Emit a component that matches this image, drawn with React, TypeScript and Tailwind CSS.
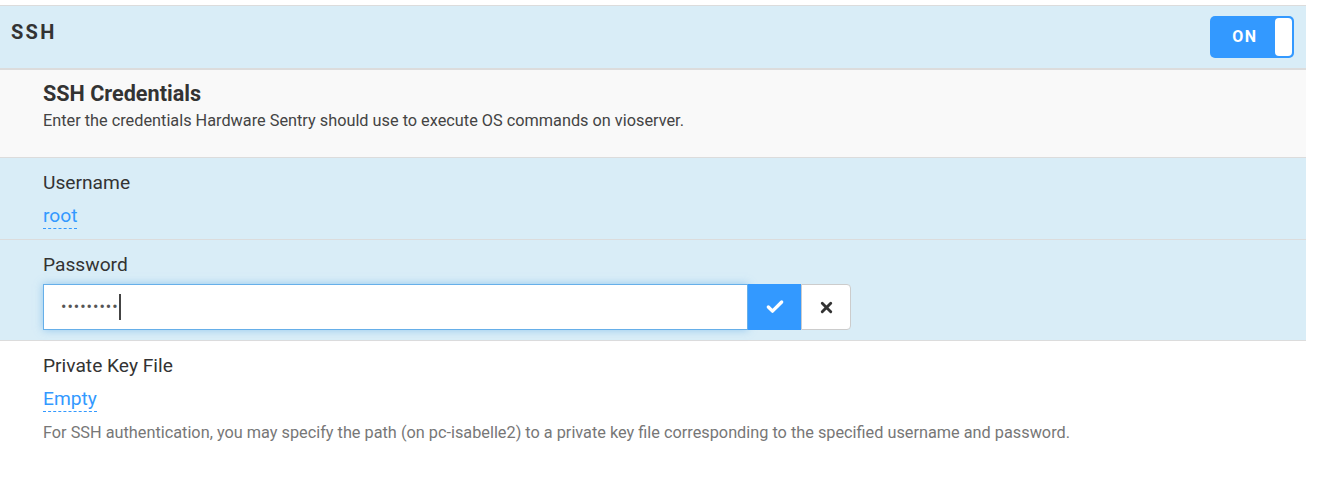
import React from 'react';
import { Check, X } from 'lucide-react';

export default function App() {
  return (
    <div className="w-[1326px] h-[495px] bg-white pt-[5px] pr-[20px] text-[#333]" style={{ fontFamily: 'Roboto, "Noto Sans", sans-serif' }}>
      {/* Section header */}
      <div className="flex items-center justify-between h-[65px] bg-[#d9edf7] border-t border-b-2 border-[#dcdcdc] pl-[11px] pr-[12px]">
        <span className="text-[20px] font-bold tracking-[2.3px] text-[#333] -mt-[10px]">SSH</span>
        <div className="flex items-center h-[42px] w-[84px] rounded-[5px] bg-[#3399ff] p-[2px]">
          <span className="flex-1 text-center text-white text-[16px] font-bold tracking-[1.5px] pl-[3px]">ON</span>
          <span className="h-full w-[17px] rounded-[4px] bg-white" />
        </div>
      </div>

      {/* Credentials intro */}
      <div className="bg-[#f9f9f9] border-b border-[#dcdcdc] h-[88px] pl-[43px] pt-[9px]">
        <h2 className="text-[21.6px] font-bold text-[#333] leading-[30px]">SSH Credentials</h2>
        <p className="text-[16.3px] text-[#444] leading-[22px] mt-[1px]">
          Enter the credentials Hardware Sentry should use to execute OS commands on vioserver.
        </p>
      </div>

      {/* Username */}
      <div className="bg-[#d9edf7] border-b border-[#dcdcdc] h-[82px] pl-[43px] pt-[12px]">
        <div className="text-[19.2px] leading-[26px] text-[#333]">Username</div>
        <span className="inline-block mt-[7px] text-[19.2px] leading-[25px] text-[#3399ff] border-b border-dashed border-[#3399ff]">root</span>
      </div>

      {/* Password */}
      <div className="bg-[#d9edf7] border-b border-[#dcdcdc] h-[101px] pl-[43px] pt-[12px]">
        <div className="text-[19.2px] leading-[26px] text-[#333]">Password</div>
        <div className="flex mt-[6px] h-[46px] w-[808px]">
          <div className="flex items-center w-[705px] bg-white border border-[#66afe9] shadow-[0_0_8px_rgba(102,175,233,0.6)] pl-[17px]">
            <span className="text-[16px] text-[#555] tracking-[1px] leading-none">•••••••••</span>
            <span className="w-[2px] h-[26px] bg-[#444]" />
          </div>
          <div className="flex items-center justify-center w-[53px] bg-[#3399ff]">
            <Check className="w-[20px] h-[20px] text-white" strokeWidth={4} />
          </div>
          <div className="flex items-center justify-center w-[50px] bg-white border border-[#ccc] rounded-r-[4px]">
            <X className="w-[17px] h-[17px] text-[#333]" strokeWidth={4} />
          </div>
        </div>
      </div>

      {/* Private key */}
      <div className="pl-[43px] pt-[12px]">
        <div className="text-[19.2px] leading-[26px] text-[#333]">Private Key File</div>
        <span className="inline-block mt-[7px] text-[19.2px] leading-[25px] text-[#3399ff] border-b border-dashed border-[#3399ff]">Empty</span>
        <p className="mt-[10px] text-[16.3px] leading-[22px] text-[#777]">
          For SSH authentication, you may specify the path (on pc-isabelle2) to a private key file corresponding to the specified username and password.
        </p>
      </div>
    </div>
  );
}
